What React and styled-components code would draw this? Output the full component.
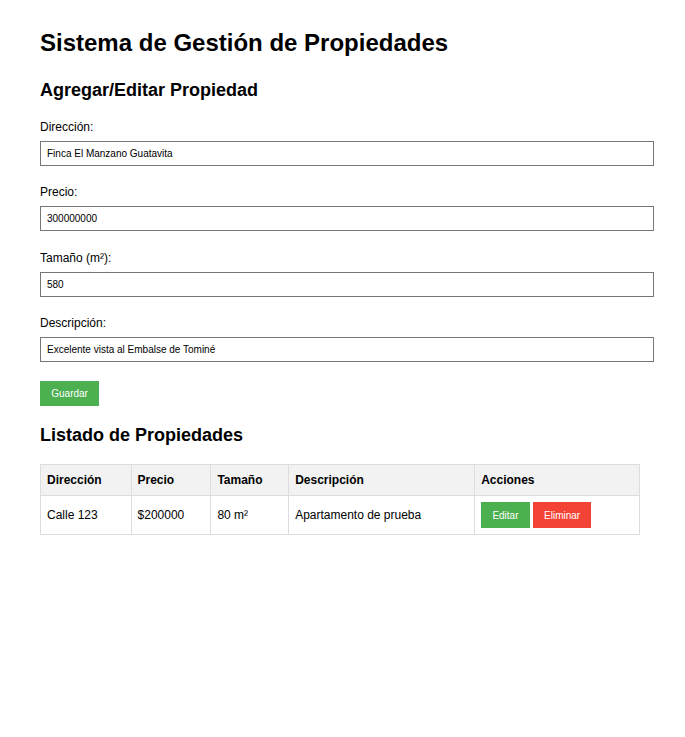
import React, { useState } from 'react';
import styled, { createGlobalStyle } from 'styled-components';

const GlobalStyle = createGlobalStyle`
  body {
    margin: 0;
    background: #fff;
    color: #000;
    font-family: "Liberation Sans", Arial, sans-serif;
  }
`;

const Page = styled.div`
  width: 600px;
  padding: 29px 40px 40px;
`;

const Title = styled.h1`
  margin: 0 0 23px;
  font-size: 24px;
  font-weight: bold;
`;

const SectionTitle = styled.h2`
  margin: 0 0 ${({ $gap }) => $gap}px;
  font-size: 18px;
  font-weight: bold;
`;

const Field = styled.div`
  margin-bottom: 19.33px;
`;

const Label = styled.label`
  display: block;
  font-size: 12px;
  line-height: 14px;
  margin-bottom: 7px;
`;

const Input = styled.input`
  display: block;
  width: 100%;
  box-sizing: content-box;
  height: 11px;
  padding: 6px;
  margin: 0;
  border: 1px solid #767676;
  border-radius: 0;
  font-family: "Liberation Sans", Arial, sans-serif;
  font-size: 10px;
  color: #000;
  outline: none;
`;

const Button = styled.button`
  height: ${({ $h }) => $h || 25}px;
  padding: 0 11.25px;
  border: none;
  border-radius: 0;
  background: ${({ $danger }) => ($danger ? '#f44336' : '#4caf50')};
  color: #fff;
  font-family: "Liberation Sans", Arial, sans-serif;
  font-size: 10px;
  cursor: pointer;
`;

const SaveRow = styled.div`
  margin-bottom: 19px;
`;

const Table = styled.table`
  width: 600px;
  border-collapse: collapse;
  font-size: 12px;

  th,
  td {
    border: 1px solid #ddd;
    text-align: left;
  }

  th {
    background: #f2f2f2;
    font-weight: bold;
    padding: 8px 6px;
    line-height: 14px;
  }

  td {
    padding: 6px;
  }
`;

const Actions = styled.div`
  display: flex;
  gap: 3px;
`;

const initial = [
  { id: 1, direccion: 'Calle 123', precio: 200000, tamano: 80, descripcion: 'Apartamento de prueba' },
];

export default function App() {
  const [form, setForm] = useState({
    direccion: 'Finca El Manzano Guatavita',
    precio: '300000000',
    tamano: '580',
    descripcion: 'Excelente vista al Embalse de Tominé',
  });
  const [rows] = useState(initial);

  const update = key => e => setForm({ ...form, [key]: e.target.value });

  const fields = [
    ['direccion', 'Dirección:'],
    ['precio', 'Precio:'],
    ['tamano', 'Tamaño (m²):'],
    ['descripcion', 'Descripción:'],
  ];

  return (
    <>
      <GlobalStyle />
      <Page>
        <Title>Sistema de Gestión de Propiedades</Title>
        <SectionTitle $gap={19}>Agregar/Editar Propiedad</SectionTitle>
        {fields.map(([key, label]) => (
          <Field key={key}>
            <Label htmlFor={key}>{label}</Label>
            <Input id={key} value={form[key]} onChange={update(key)} />
          </Field>
        ))}
        <SaveRow>
          <Button>Guardar</Button>
        </SaveRow>
        <SectionTitle $gap={18}>Listado de Propiedades</SectionTitle>
        <Table>
          <thead>
            <tr>
              <th>Dirección</th>
              <th>Precio</th>
              <th>Tamaño</th>
              <th>Descripción</th>
              <th>Acciones</th>
            </tr>
          </thead>
          <tbody>
            {rows.map(r => (
              <tr key={r.id}>
                <td>{r.direccion}</td>
                <td>${r.precio}</td>
                <td>{r.tamano} m²</td>
                <td>{r.descripcion}</td>
                <td>
                  <Actions>
                    <Button $h={26}>Editar</Button>
                    <Button $h={26} $danger>
                      Eliminar
                    </Button>
                  </Actions>
                </td>
              </tr>
            ))}
          </tbody>
        </Table>
      </Page>
    </>
  );
}
